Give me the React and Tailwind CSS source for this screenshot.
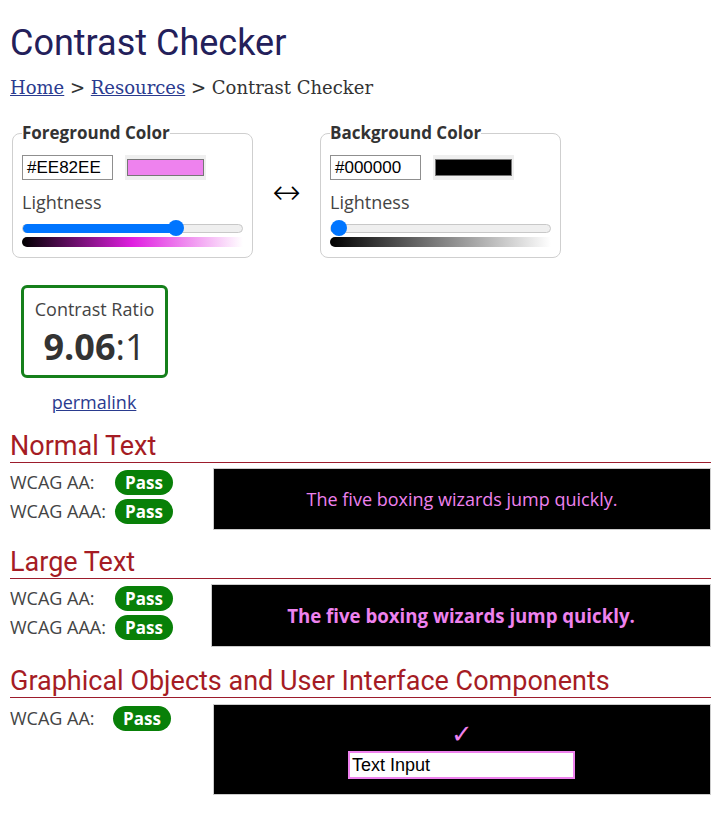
import React from 'react';

const sans = { fontFamily: '"Open Sans", "Noto Sans", sans-serif' };

const ColorField = ({ legend, hex, swatch, thumb, gradient }) => (
	<fieldset className="w-[241px] border border-[#cfcfcf] rounded-[8px] px-[9px] pb-[10px]">
		<legend className="px-0 font-bold text-[17px] leading-[22px] text-[#333]" style={sans}>{legend}</legend>
		<div className="flex items-center gap-[12px] mt-[11px]">
			<div className="w-[91px] h-[25px] border border-[#8f8f8f] bg-white px-[4px] text-[17px] leading-[23px] text-black font-['Liberation_Sans',Arial,sans-serif]">{hex}</div>
			<div className="w-[81px] h-[25px] bg-[#efefef] flex items-center justify-center">
				<div className="w-[77px] h-[17px] border border-[#767676]" style={{ background: swatch }} />
			</div>
		</div>
		<div className="mt-[10px] text-[18px] leading-[24px] text-[#444]" style={sans}>Lightness</div>
		<div className="relative mt-[10px] h-[9px] rounded-full bg-[#efefef] border border-[#c8c8c8]">
			<div className="absolute left-0 top-[-1px] h-[9px] rounded-full bg-[#0075ff]" style={{ width: thumb }} />
			<div className="absolute top-[-5px] w-[16px] h-[16px] rounded-full bg-[#0075ff]" style={{ left: `calc(${thumb} - 8px)` }} />
		</div>
		<div className="mt-[4px] h-[10px] rounded-l-full" style={{ background: gradient }} />
	</fieldset>
);

const Pass = () => (
	<span className="inline-flex items-center justify-center w-[58px] h-[25px] rounded-full bg-[#088008] text-white font-bold text-[17px] leading-none" style={sans}>Pass</span>
);

const Row = ({ label }) => (
	<div className="flex items-center h-[29px]">
		<span className="w-[105px] text-[18px] text-[#444]" style={sans}>{label}</span>
		<Pass />
	</div>
);

const Heading = ({ children }) => (
	<h2 className="text-[27px] leading-[30px] text-[#a51c24] font-['Roboto',sans-serif] border-b border-[#9c1c2c] pb-[1px]">{children}</h2>
);

export default function App() {
	return (
		<div className="bg-white px-[10px] pr-[11px] pt-[22px] overflow-hidden h-[817px]">
			<h1 className="text-[36px] leading-[42px] text-[#23205a] font-['Roboto',sans-serif]">Contrast Checker</h1>
			<div className="mt-[12px] text-[18px] leading-[24px] text-[#333] font-['DejaVu_Serif',serif]">
				<a href="#" className="text-[#2a3b8f] underline">Home</a> &gt; <a href="#" className="text-[#2a3b8f] underline">Resources</a> &gt; Contrast Checker
			</div>

			<div className="flex items-start mt-[22px] ml-[2px]">
				<ColorField
					legend="Foreground Color"
					hex="#EE82EE"
					swatch="#EE82EE"
					thumb="70%"
					gradient="linear-gradient(to right, #000000, #e01fe0 50%, #ffffff)"
				/>
				<div className="w-[67px] flex justify-center pt-[53px] text-[34px] leading-none text-black font-['DejaVu_Sans',sans-serif] font-light">↔</div>
				<ColorField
					legend="Background Color"
					hex="#000000"
					swatch="#000000"
					thumb="3.6%"
					gradient="linear-gradient(to right, #000000, #808080 50%, #ffffff)"
				/>
			</div>

			<div className="mt-[27px] ml-[11px] w-[147px] h-[93px] border-[3px] border-[#15801b] rounded-[6px] flex flex-col items-center pt-[9px]" style={sans}>
				<div className="text-[18px] leading-[24px] text-[#444]">Contrast Ratio</div>
				<div className="mt-[6px] text-[36px] leading-[40px] text-[#333]"><span className="font-bold">9.06</span>:1</div>
			</div>
			<div className="ml-[10px] w-[148px] text-center mt-[12px] text-[18px] leading-[24px]" style={sans}>
				<a href="#" className="text-[#2a3b8f] underline">permalink</a>
			</div>

			<div className="mt-[17px]">
				<Heading>Normal Text</Heading>
				<div className="flex mt-[5px]">
					<div className="w-[203px]">
						<Row label="WCAG AA:" />
						<Row label="WCAG AAA:" />
					</div>
					<div className="flex-1 h-[62px] bg-black border border-[#ccc] flex items-center justify-center text-[18px] text-[#EE82EE]" style={sans}>
						The five boxing wizards jump quickly.
					</div>
				</div>
			</div>

			<div className="mt-[17px]">
				<Heading>Large Text</Heading>
				<div className="flex mt-[5px]">
					<div className="w-[201px]">
						<Row label="WCAG AA:" />
						<Row label="WCAG AAA:" />
					</div>
					<div className="flex-1 h-[63px] bg-black border border-[#ccc] flex items-center justify-center text-[18.67px] font-bold text-[#EE82EE]" style={sans}>
						The five boxing wizards jump quickly.
					</div>
				</div>
			</div>

			<div className="mt-[19px]">
				<Heading>Graphical Objects and User Interface Components</Heading>
				<div className="flex mt-[6px]">
					<div className="w-[203px]">
						<div className="flex items-center h-[28px]">
							<span className="w-[103px] text-[18px] text-[#444]" style={sans}>WCAG AA:</span>
							<Pass />
						</div>
					</div>
					<div className="flex-1 h-[91px] bg-black border border-[#ccc] flex flex-col items-center pt-[17px]">
						<div className="text-[26px] leading-[24px] text-[#EE82EE] font-['DejaVu_Sans',sans-serif] font-bold">✓</div>
						<div className="mt-[5px] ml-[-1px] w-[227px] h-[28px] border-[2px] border-[#EE82EE] bg-white px-[2px] text-[18px] leading-[24px] text-black font-['Liberation_Sans',Arial,sans-serif]">Text Input</div>
					</div>
				</div>
			</div>

			<h2 className="mt-[19px] text-[27px] leading-[32px] text-[#a51c24] font-['Roboto',sans-serif]">Explanation</h2>
		</div>
	);
}
